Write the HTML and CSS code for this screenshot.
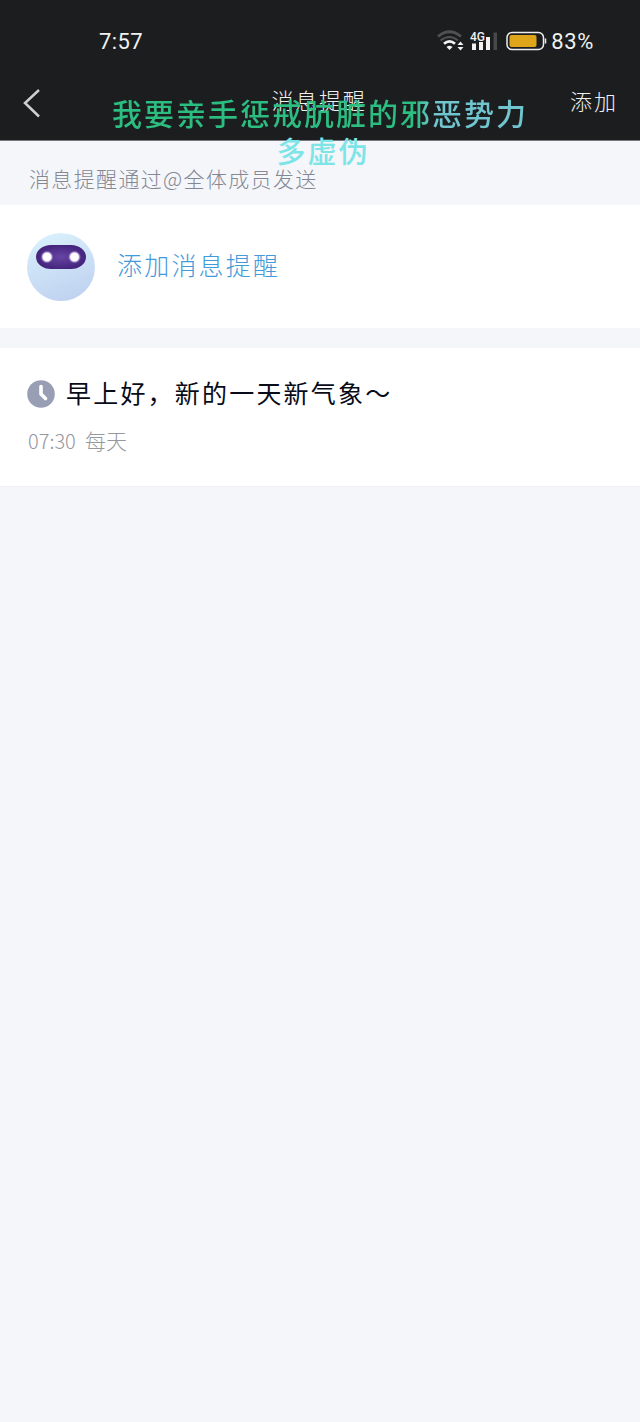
FILE: index.html
```html
<!DOCTYPE html>
<html lang="zh-CN">
<head>
<meta charset="utf-8">
<title>消息提醒</title>
<link rel="stylesheet" href="styles.css">
</head>
<body>
<div class="screen">
  <header class="top">
    <div class="status">
      <span class="clock">7:57</span>
      <div class="indicators">
        <svg class="wifi" width="28" height="22" viewBox="0 0 28 22" fill="none">
          <path d="M1 6.500Q12.500 -3 24 6.500" stroke="#505153" stroke-width="2.800"/>
          <path d="M3.500 10.500Q12.500 3.500 21 10.500" stroke="#505153" stroke-width="1.800"/>
          <path d="M7 13.800Q12.500 9 18 13.800" stroke="#f1f1f1" stroke-width="2.800"/>
          <path d="M9.500 17Q12.500 14.500 15.500 17L12.500 20Z" fill="#f1f1f1"/>
          <path d="M20.500 15L23.500 11.500L26.500 15ZM20.500 17L23.500 20.500L26.500 17Z" fill="#f1f1f1"/>
        </svg>
        <svg class="signal" width="28" height="22" viewBox="0 0 28 22">
          <path d="M2 13.500h4v6.500H2zM9 12h4v8H9zM16 7h4v13h-4z" fill="#f1f1f1"/>
          <path d="M23.500 2.500h3.500V20h-3.500z" fill="#48494b"/>
          <text class="net" x="0" y="10.500">4G</text>
        </svg>
        <svg class="battery" width="42" height="20" viewBox="0 0 42 20">
          <rect x="1" y="1.500" width="36.500" height="17" rx="5" fill="none" stroke="#ededed" stroke-width="1.500"/>
          <rect x="3.500" y="4" width="27" height="12" rx="2" fill="#dfa51a"/>
          <path d="M39.500 7.500V12.500" stroke="#ededed" stroke-width="1.500"/>
        </svg>
        <span class="percent">83%</span>
      </div>
    </div>
    <nav class="nav">
      <svg class="back" width="20" height="32" viewBox="0 0 20 32" fill="none">
        <path d="M18 3L4 16L18 29.500" stroke="#cfcfd0" stroke-width="2.500"/>
      </svg>
      <h1 class="title">消息提醒</h1>
      <span class="add">添加</span>
    </nav>
    <div class="lyrics">
      <div class="line first">我要亲手惩戒肮脏的邪恶势力</div>
      <div class="line second">多虚伪</div>
    </div>
  </header>
  <p class="hint">消息提醒通过@全体成员发送</p>
  <section class="create">
    <svg class="robot" width="70" height="70" viewBox="0 0 70 70">
      <defs>
        <linearGradient id="face" x1=".3" y1="0" x2=".65" y2="1">
          <stop offset="0" stop-color="#d8f0fb"/><stop offset="1" stop-color="#bfd1f0"/>
        </linearGradient>
        <radialGradient id="visor">
          <stop offset="0" stop-color="#6645a4"/><stop offset="1" stop-color="#45257d"/>
        </radialGradient>
        <radialGradient id="eye">
          <stop offset=".6" stop-color="#fff"/><stop offset="1" stop-color="#b99ae6" stop-opacity="0"/>
        </radialGradient>
      </defs>
      <circle cx="35" cy="35" r="34" fill="url(#face)"/>
      <rect x="10" y="13" width="50" height="24" rx="15" ry="12" fill="url(#visor)"/>
      <circle cx="21" cy="25" r="6.500" fill="url(#eye)"/>
      <circle cx="48.500" cy="25" r="6.500" fill="url(#eye)"/>
    </svg>
    <span class="create-label">添加消息提醒</span>
  </section>
  <section class="reminder">
    <div class="reminder-head">
      <svg class="timer" width="28" height="28" viewBox="0 0 28 28" fill="none">
        <circle cx="14" cy="14" r="13.800" fill="#989fb5"/>
        <path d="M14 6.500V14L18.500 18.500" stroke="#fff" stroke-width="3.600" stroke-linecap="round" stroke-linejoin="round"/>
      </svg>
      <span class="message">早上好，新的一天新气象～</span>
    </div>
    <div class="schedule"><span class="time">07:30</span><span class="repeat">每天</span></div>
  </section>
</div>
</body>
</html>
```
FILE: styles.css
```css
* { box-sizing: border-box; }
body {
  margin: 0;
  background: #f4f6fa;
  font-family: "Noto Sans CJK SC", sans-serif;
  font-weight: 300;
}
.screen { min-height: 1422px; background: #f4f6fa; }
.top {
  position: relative;
  height: 141px;
  background: #1b1d1f;
  border-bottom: 1px solid #77787d;
}
.status {
  display: flex;
  justify-content: space-between;
  align-items: center;
  height: 82px;
  padding: 0 46px 0 99px;
  color: #f1f1f1;
  font-family: Roboto, sans-serif;
  font-weight: 400;
  font-size: 22px;
}
.clock { letter-spacing: .4px; }
.indicators { display: flex; align-items: center; }
.wifi { margin-right: 5px; }
.signal { margin-right: 8px; }
.battery { margin-right: 3px; }
.percent { letter-spacing: .6px; }
.net { font: 500 12px Roboto, sans-serif; fill: #f1f1f1; stroke: #1b1d1f; stroke-width: 2px; paint-order: stroke; }
.nav {
  display: grid;
  grid-template-columns: 1fr auto 1fr;
  align-items: center;
  height: 42px;
  padding: 0 23px 0 21px;
  color: #f0f0f0;
}
.title { margin: 0; font-size: 22px; line-height: 32px; font-weight: 300; letter-spacing: 1.700px; transform: translateY(-4px); }
.add { justify-self: end; font-size: 22px; line-height: 32px; letter-spacing: 2px; margin: -6px -1px 0 0; }
.lyrics {
  position: absolute;
  top: 93px;
  left: 0;
  width: 100%;
  display: flex;
  flex-direction: column;
  align-items: center;
  font-weight: 500;
  letter-spacing: 2px;
}
.line { font-size: 30px; line-height: 38px; }
.first {
  background: linear-gradient(90deg, #2cbd81 73%, #70c5cf 77%);
  background-clip: text;
  -webkit-background-clip: text;
  color: transparent;
}
.second { color: #7de5e8; font-size: 29px; padding-left: 6px; }
.hint {
  margin: 0;
  height: 64px;
  padding: 21px 29px 0;
  color: #858894;
  font-size: 21px;
  line-height: 32px;
  letter-spacing: 1.350px;
}
.create {
  display: flex;
  align-items: center;
  gap: 21px;
  height: 123px;
  padding: 0 26px;
  background: #fff;
}
.create-label { color: #439ad9; font-size: 25px; letter-spacing: 2.200px; margin-top: -5px; }
.reminder {
  height: 139px;
  margin-top: 20px;
  padding: 27px 27px 0;
  background: #fff;
  border-bottom: 1px solid #f0f1f5;
}
.reminder-head { display: flex; align-items: center; gap: 11px; height: 38px; }
.message { color: #080b18; font-size: 25px; font-weight: 400; letter-spacing: 2.200px; margin-top: -5px; white-space: nowrap; }
.schedule {
  display: flex;
  align-items: center;
  gap: 8px;
  height: 32px;
  margin-top: 11px;
  padding-left: 1px;
  color: #9698a0;
  font-size: 21px;
}
.time { width: 49px; font-size: 20px; white-space: nowrap; letter-spacing: 0; }
.repeat { letter-spacing: 0; }
```
